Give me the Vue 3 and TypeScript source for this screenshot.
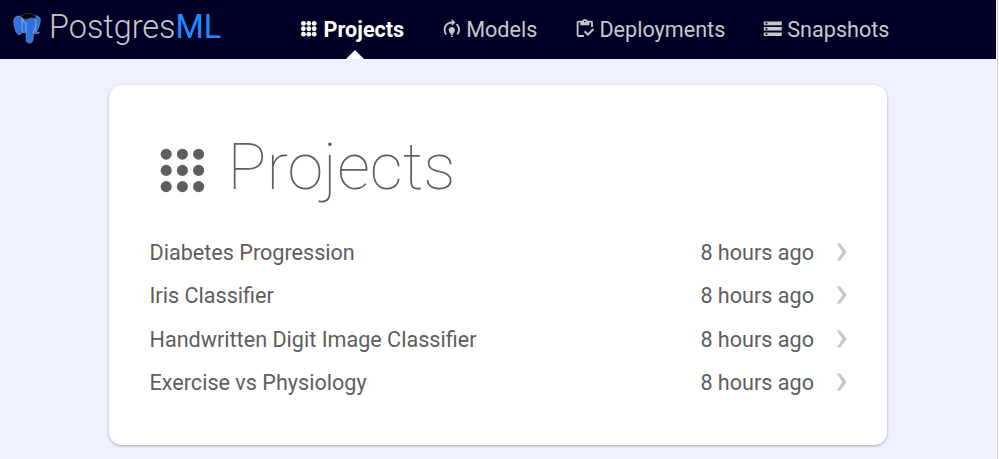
<script setup lang="ts">
interface NavItem {
  label: string
  icon: 'apps' | 'model' | 'deploy' | 'storage'
  active?: boolean
}

interface Project {
  name: string
  updated: string
}

const navItems: NavItem[] = [
  { label: 'Projects', icon: 'apps', active: true },
  { label: 'Models', icon: 'model' },
  { label: 'Deployments', icon: 'deploy' },
  { label: 'Snapshots', icon: 'storage' },
]

const projects: Project[] = [
  { name: 'Diabetes Progression', updated: '8 hours ago' },
  { name: 'Iris Classifier', updated: '8 hours ago' },
  { name: 'Handwritten Digit Image Classifier', updated: '8 hours ago' },
  { name: 'Exercise vs Physiology', updated: '8 hours ago' },
]

const dots: number[] = [6, 12, 18]
</script>

<template>
  <div class="page">
    <div class="content">
      <header class="topbar">
        <a class="brand">
          <svg class="elephant" viewBox="0 0 30 34">
            <path class="body" d="M7 4.500C3 3.200.8 6 .8 10c.2 5 2.200 11.500 4.700 13.200 1.700.8 3-.8 4-2l4 .3c.2 3.500-.2 6.500.5 8.800 1 2.400 5.500 2.400 6.300-.5.700-2.200.6-5.500.9-7.800 2.300.7 5 .5 6.300-1-1.200-.3-2.400 0-3.200-.8C26.800 16 29 10 28 6.500 26.500 3.700 23 3.300 20.500 4 17 3 11 3 7 4.500Z" />
            <path class="line" d="M9.500 8c-.9 3 .1 5-.3 8-.2 2 .8 3.500 1 5M10.500 10.500c2.600-.8 3.300.7 3.200 3.500-.1 2.800-1.300 4.200.3 7.200M22 6c2 2.500 2.400 6 1.300 9.500-.6 2-.2 3.500.9 4.800M21.200 22c-.2-2 .5-3.500 1.500-5" />
            <path class="cap" d="M8 4.500C11 .8 18.500.2 23 4l.3 2.800c-3-1.600-6-.6-8 .3-2.300.8-4.800.2-7.300-2.600Z" />
            <path class="accent" d="M8.800 5.500l2 4" />
          </svg>
          <span class="brand-text">Postgres<span class="ml">ML</span></span>
        </a>
        <nav class="nav">
          <a v-for="item in navItems" :key="item.label" class="nav-item" :class="[item.icon, { active: item.active }]">
            <svg class="nav-icon" viewBox="0 0 24 24">
              <template v-if="item.icon === 'apps'">
                <template v-for="y in dots" :key="y">
                  <circle v-for="x in dots" :key="x" :cx="x" :cy="y" r="2.700" />
                </template>
              </template>
              <path v-else-if="item.icon === 'model'" d="M15.500 13.500c0 2-2.500 3.500-2.500 5h-2c0-1.500-2.500-3-2.500-5 0-1.930 1.570-3.500 3.500-3.500s3.500 1.570 3.500 3.500zm-2.500 6h-2V21h2v-1.500zm6-6.500c0 1.680-.59 3.230-1.570 4.450l1.420 1.420C20.180 17.270 21 15.230 21 13c0-2.740-1.230-5.190-3.160-6.840l-1.420 1.420C17.990 8.860 19 10.820 19 13zm-3-8-4-4v3c-4.970 0-9 4.030-9 9 0 2.230.82 4.270 2.150 5.870l1.420-1.420C5.590 16.230 5 14.680 5 13c0-3.860 3.140-7 7-7v3l4-4z" />
              <template v-else-if="item.icon === 'deploy'">
                <path d="M5 5h2v3h10V5h2v5h2V5c0-1.100-.9-2-2-2h-4.180C14.400 1.840 13.300 1 12 1s-2.400.84-2.820 2H5c-1.100 0-2 .9-2 2v14c0 1.100.9 2 2 2h6v-2H5V5zm7-2c.55 0 1 .45 1 1s-.45 1-1 1-1-.45-1-1 .45-1 1-1z" />
                <path d="M21 11.500 15.510 17l-3.010-3L11 15.500l4.510 4.500L22.500 13z" />
              </template>
              <path v-else d="M2 20h20v-4H2v4zm2-3h2v2H4v-2zM2 4v4h20V4H2zm4 3H4V5h2v2zm-4 7h20v-4H2v4zm2-3h2v2H4v-2z" />
            </svg>
            <span>{{ item.label }}</span>
          </a>
        </nav>
      </header>

      <main class="card">
        <h1 class="title">
          <svg class="title-icon" viewBox="0 0 24 24">
            <template v-for="y in dots" :key="y">
              <circle v-for="x in dots" :key="x" :cx="x" :cy="y" r="2.050" />
            </template>
          </svg>
          <span class="title-text">Projects</span>
        </h1>
        <ul class="list">
          <li v-for="project in projects" :key="project.name" class="row">
            <span class="name">{{ project.name }}</span>
            <span class="time">{{ project.updated }}</span>
            <svg class="chevron" viewBox="0 0 12 18">
              <path d="M.7.500h3.600L10.700 9l-6.400 8.500H.7L6.500 9Z" />
            </svg>
          </li>
        </ul>
      </main>
    </div>
    <div class="edge"></div>
  </div>
</template>

<style>
body {
  margin: 0;
  background: #fff;
}
</style>

<style scoped>
.page {
  display: flex;
  width: 999px;
  height: 459px;
  overflow: hidden;
  font-family: Roboto, 'Liberation Sans', sans-serif;
  font-size: 21.6px;
  color: #5e5e5e;
}

.content {
  width: 996px;
  background: #eff1ff;
}

.edge {
  width: 1px;
  margin-left: 1px;
  background: #c8c8c8;
}

.topbar {
  display: flex;
  height: 59px;
  background: #000026;
  color: #c8c8c8;
}

.brand {
  box-sizing: border-box;
  display: flex;
  width: 298px;
  padding-left: 13px;
}

.elephant {
  width: 29px;
  height: 33px;
  margin-top: 12px;
}

.elephant .body {
  fill: #2f72dc;
  stroke: #8aa4cf;
  stroke-width: 0.6;
}

.elephant .line {
  fill: none;
  stroke: #91b4ed;
  stroke-width: 0.9;
}

.elephant .cap {
  fill: #080808;
  stroke: #4b4b50;
  stroke-width: 0.6;
}

.elephant .accent {
  stroke: #d5b56b;
  stroke-width: 1;
}

.brand-text {
  margin-left: 7px;
  font-size: 32.4px;
  font-weight: 300;
  line-height: 54px;
}

.ml {
  color: #1a8cff;
  font-weight: 400;
}

.nav {
  display: flex;
  gap: 36.4px;
}

.nav-item {
  position: relative;
  display: flex;
  height: 59px;
  line-height: 59px;
  white-space: nowrap;
}

.nav-icon {
  width: 21.6px;
  height: 21.6px;
  margin: 18.4px 4px 0 0;
  fill: currentColor;
}

.active {
  color: #fff;
  font-weight: 700;
}

.active::after {
  content: '';
  position: absolute;
  bottom: 0;
  left: 48.4px;
  border: 9px solid transparent;
  border-top: 0;
  border-bottom-color: #fff;
}

.card {
  box-sizing: border-box;
  width: 778px;
  height: 360px;
  margin: 26px 0 0 109px;
  padding: 41px 39px 41px 40.5px;
  border-radius: 13px;
  background: #fff;
  box-shadow: 0 1px 3px rgba(0, 0, 38, 0.3);
}

.title {
  display: flex;
  align-items: center;
  height: 80px;
  margin: 0;
  font-size: 64.8px;
  font-weight: 100;
}

.title-icon {
  width: 64.8px;
  height: 64.8px;
  margin: 8px 13.2px 0 0;
  fill: #5e5e5e;
}

.title-text {
  padding-top: 2px;
}

.list {
  margin: 25px 0 0;
  padding: 0;
  list-style: none;
}

.row {
  display: flex;
  align-items: center;
  height: 43.3px;
}

.time {
  margin-left: auto;
}

.chevron {
  width: 12px;
  height: 18px;
  margin: 0 0 1.4px 22px;
  fill: #c8c8c8;
}
</style>
